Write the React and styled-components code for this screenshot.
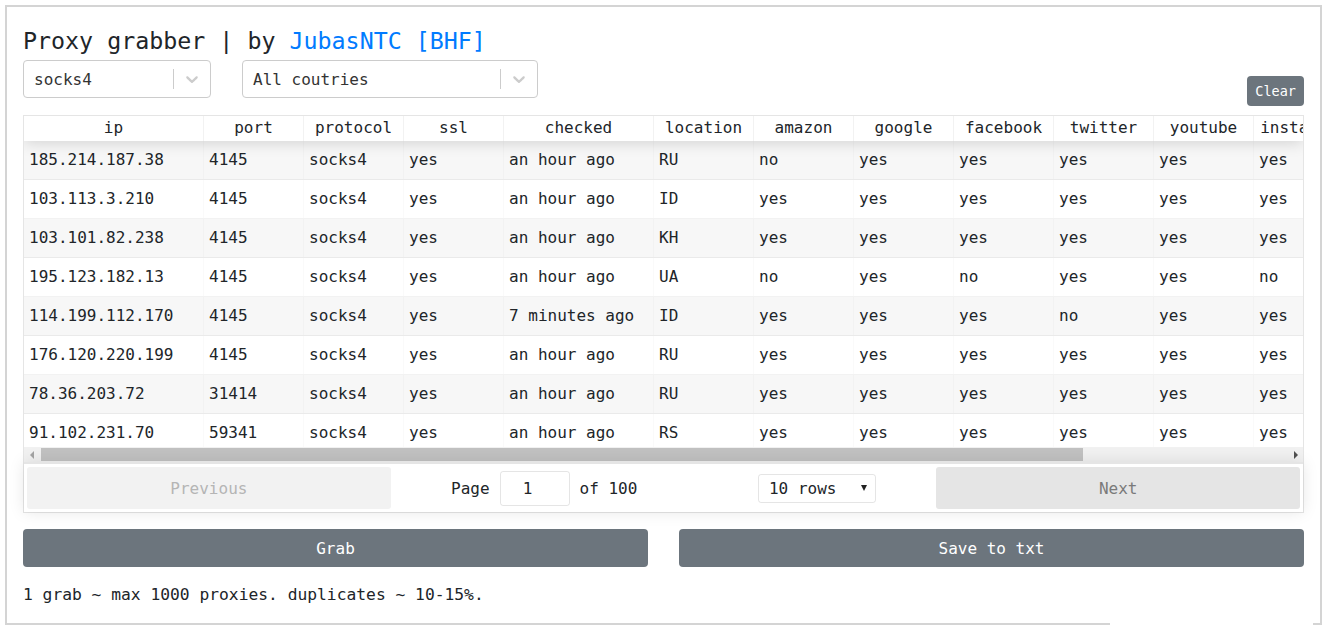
import React from 'react';
import styled, { createGlobalStyle } from 'styled-components';

const GlobalStyle = createGlobalStyle`
  body {
    margin: 0;
    background: #fff;
    color: #212529;
    font-family: "DejaVu Sans Mono", "Liberation Mono", monospace;
    font-size: 16px;
  }
  * { box-sizing: border-box; }
`;

const columns = [
  { key: 'ip', label: 'ip', width: 180 },
  { key: 'port', label: 'port', width: 100 },
  { key: 'protocol', label: 'protocol', width: 100 },
  { key: 'ssl', label: 'ssl', width: 100 },
  { key: 'checked', label: 'checked', width: 150 },
  { key: 'location', label: 'location', width: 100 },
  { key: 'amazon', label: 'amazon', width: 100 },
  { key: 'google', label: 'google', width: 100 },
  { key: 'facebook', label: 'facebook', width: 100 },
  { key: 'twitter', label: 'twitter', width: 100 },
  { key: 'youtube', label: 'youtube', width: 100 },
  { key: 'instagram', label: 'instagram', width: 100 },
];

const mk = (ip, port, checked, location, amazon, google, facebook, twitter, youtube, instagram) => ({
  ip, port, protocol: 'socks4', ssl: 'yes', checked, location, amazon, google, facebook, twitter, youtube, instagram,
});

const rows = [
  mk('185.214.187.38', '4145', 'an hour ago', 'RU', 'no', 'yes', 'yes', 'yes', 'yes', 'yes'),
  mk('103.113.3.210', '4145', 'an hour ago', 'ID', 'yes', 'yes', 'yes', 'yes', 'yes', 'yes'),
  mk('103.101.82.238', '4145', 'an hour ago', 'KH', 'yes', 'yes', 'yes', 'yes', 'yes', 'yes'),
  mk('195.123.182.13', '4145', 'an hour ago', 'UA', 'no', 'yes', 'no', 'yes', 'yes', 'no'),
  mk('114.199.112.170', '4145', '7 minutes ago', 'ID', 'yes', 'yes', 'yes', 'no', 'yes', 'yes'),
  mk('176.120.220.199', '4145', 'an hour ago', 'RU', 'yes', 'yes', 'yes', 'yes', 'yes', 'yes'),
  mk('78.36.203.72', '31414', 'an hour ago', 'RU', 'yes', 'yes', 'yes', 'yes', 'yes', 'yes'),
  mk('91.102.231.70', '59341', 'an hour ago', 'RS', 'yes', 'yes', 'yes', 'yes', 'yes', 'yes'),
];

function Chevron() {
  return (
    <svg width="20" height="20" viewBox="0 0 20 20" fill="#ccc">
      <path d="M4.516 7.548c0.436-0.446 1.043-0.481 1.576 0l3.908 3.747 3.908-3.747c0.533-0.481 1.141-0.446 1.574 0 0.436 0.445 0.408 1.197 0 1.615-0.406 0.418-4.695 4.502-4.695 4.502-0.217 0.223-0.502 0.335-0.787 0.335s-0.57-0.112-0.789-0.335c0 0-4.287-4.084-4.695-4.502s-0.436-1.17 0-1.615z" />
    </svg>
  );
}

function Dropdown({ value, width }) {
  return (
    <SelectBox $width={width}>
      <SelectValue>{value}</SelectValue>
      <Separator />
      <Indicator><Chevron /></Indicator>
    </SelectBox>
  );
}

export default function App() {
  return (
    <>
      <GlobalStyle />
      <Frame>
        <Title>
          Proxy grabber | by <Link>JubasNTC [BHF]</Link>
        </Title>

        <Controls>
          <Dropdown value="socks4" width={188} />
          <Dropdown value="All coutries" width={296} />
          <ClearButton>Clear</ClearButton>
        </Controls>

        <TableWrap>
          <TableArea>
            <HeaderRow>
              {columns.map((c) => (
                <HeadCell key={c.key} $width={c.width}>{c.label}</HeadCell>
              ))}
            </HeaderRow>
            <Body>
              {rows.map((r, i) => (
                <Row key={r.ip} $striped={i % 2 === 0}>
                  {columns.map((c) => (
                    <Cell key={c.key} $width={c.width}>{r[c.key]}</Cell>
                  ))}
                </Row>
              ))}
            </Body>
          </TableArea>

          <ScrollTrack>
            <ScrollArrow $dir="left" $color="#a3a3a3" />
            <ThumbLane>
              <Thumb />
            </ThumbLane>
            <ScrollArrow $dir="right" $color="#505050" />
          </ScrollTrack>

          <Pagination>
            <PageButton $disabled>Previous</PageButton>
            <PageCenter>
              <PageInfo>
                Page
                <PageInput>1</PageInput>
                of 100
              </PageInfo>
              <RowsSelect>
                10 rows
                <SmallCaret />
              </RowsSelect>
            </PageCenter>
            <PageButton>Next</PageButton>
          </Pagination>
        </TableWrap>

        <Actions>
          <ActionButton>Grab</ActionButton>
          <ActionButton>Save to txt</ActionButton>
        </Actions>

        <Note>1 grab ~ max 1000 proxies. duplicates ~ 10-15%.</Note>

        <Patch />
      </Frame>
    </>
  );
}

const Frame = styled.div`
  position: relative;
  margin: 5px 7px 0 5px;
  border: 2px solid #d4d4d4;
  padding: 20px 16px 16px;
`;

const Title = styled.h3`
  margin: 0 0 5px;
  font-size: 23.3px;
  line-height: 28px;
  font-weight: normal;
  color: #212529;
`;

const Link = styled.span`
  color: #007bff;
`;

const Controls = styled.div`
  display: flex;
  align-items: flex-start;
  gap: 31px;
  margin-bottom: 9px;
`;

const SelectBox = styled.div`
  width: ${(p) => p.$width}px;
  height: 38px;
  display: flex;
  align-items: center;
  border: 1px solid #ccc;
  border-radius: 4px;
  background: #fff;
`;

const SelectValue = styled.div`
  flex: 1;
  padding: 0 10px;
  color: #333;
  font-size: 16px;
`;

const Separator = styled.span`
  width: 1px;
  align-self: stretch;
  margin: 8px 0;
  background: #ccc;
`;

const Indicator = styled.div`
  padding: 0 8px;
  display: flex;
  align-items: center;
`;

const ClearButton = styled.button`
  margin-left: auto;
  margin-top: 16px;
  height: 30px;
  padding: 0 8px;
  border: none;
  border-radius: 4px;
  background: #6c757d;
  color: #fff;
  font-family: inherit;
  font-size: 13.5px;
`;

const TableWrap = styled.div`
  border: 1px solid rgba(0, 0, 0, 0.1);
  display: flex;
  flex-direction: column;
`;

const TableArea = styled.div`
  overflow: hidden;
`;

const HeaderRow = styled.div`
  display: flex;
  position: relative;
  z-index: 1;
  background: #fff;
  box-shadow: 0 2px 15px 0 rgba(0, 0, 0, 0.15);
`;

const HeadCell = styled.div`
  flex: 0 0 ${(p) => p.$width}px;
  height: 25px;
  line-height: 24px;
  padding: 0 5px;
  text-align: center;
  white-space: nowrap;
  overflow: hidden;
  border-right: 1px solid rgba(0, 0, 0, 0.05);
`;

const Body = styled.div`
  height: 306px;
  overflow: hidden;
`;

const Row = styled.div`
  display: flex;
  background: ${(p) => (p.$striped ? 'rgba(0, 0, 0, 0.03)' : '#fff')};
  border-bottom: 1px solid rgba(0, 0, 0, 0.05);
`;

const Cell = styled.div`
  flex: 0 0 ${(p) => p.$width}px;
  padding: 7px 5px;
  line-height: 24px;
  white-space: nowrap;
  overflow: hidden;
  border-right: 1px solid rgba(0, 0, 0, 0.02);
`;

const ScrollTrack = styled.div`
  height: 15px;
  display: flex;
  background: #f1f1f1;
`;

const ScrollArrow = styled.div`
  flex: 0 0 15px;
  display: flex;
  align-items: center;
  justify-content: center;
  &::before {
    content: '';
    border-top: 4px solid transparent;
    border-bottom: 4px solid transparent;
    ${(p) => (p.$dir === 'left'
      ? `border-right: 4px solid ${p.$color};`
      : `border-left: 4px solid ${p.$color};`)}
  }
`;

const ThumbLane = styled.div`
  flex: 1;
  padding: 1px 2px;
`;

const Thumb = styled.div`
  width: 1042px;
  height: 100%;
  background: #c1c1c1;
`;

const Pagination = styled.div`
  display: flex;
  align-items: stretch;
  padding: 3px;
  border-top: 2px solid rgba(0, 0, 0, 0.1);
  box-shadow: 0 0 15px 0 rgba(0, 0, 0, 0.1);
`;

const PageButton = styled.div`
  flex: 1;
  height: 42px;
  display: flex;
  align-items: center;
  justify-content: center;
  border-radius: 3px;
  background: ${(p) => (p.$disabled ? '#f2f2f2' : '#e5e5e5')};
  color: ${(p) => (p.$disabled ? '#b5b5b5' : '#7a7a7a')};
`;

const PageCenter = styled.div`
  flex: 1.5;
  display: flex;
  align-items: center;
  justify-content: space-around;
`;

const PageInfo = styled.div`
  display: flex;
  align-items: center;
`;

const PageInput = styled.div`
  width: 70px;
  height: 35px;
  margin: 0 10px;
  padding-right: 14px;
  display: flex;
  align-items: center;
  justify-content: center;
  border: 1px solid rgba(0, 0, 0, 0.1);
  border-radius: 3px;
`;

const RowsSelect = styled.div`
  width: 118px;
  height: 29px;
  padding: 0 8px 0 10px;
  display: flex;
  align-items: center;
  justify-content: space-between;
  border: 1px solid rgba(0, 0, 0, 0.1);
  border-radius: 3px;
`;

const SmallCaret = styled.span`
  border-left: 3px solid transparent;
  border-right: 3px solid transparent;
  border-top: 6px solid #222;
`;

const Actions = styled.div`
  display: grid;
  grid-template-columns: 1fr 1fr;
  gap: 31px;
  margin-top: 16px;
`;

const ActionButton = styled.button`
  height: 38px;
  border: none;
  border-radius: 4px;
  background: #6c757d;
  color: #fff;
  font-family: inherit;
  font-size: 16px;
`;

const Note = styled.p`
  margin: 16px 0 0;
  font-size: 16.3px;
  line-height: 24px;
`;

const Patch = styled.div`
  position: absolute;
  left: 1103px;
  bottom: -6px;
  width: 203px;
  height: 24px;
  background: #fff;
`;
